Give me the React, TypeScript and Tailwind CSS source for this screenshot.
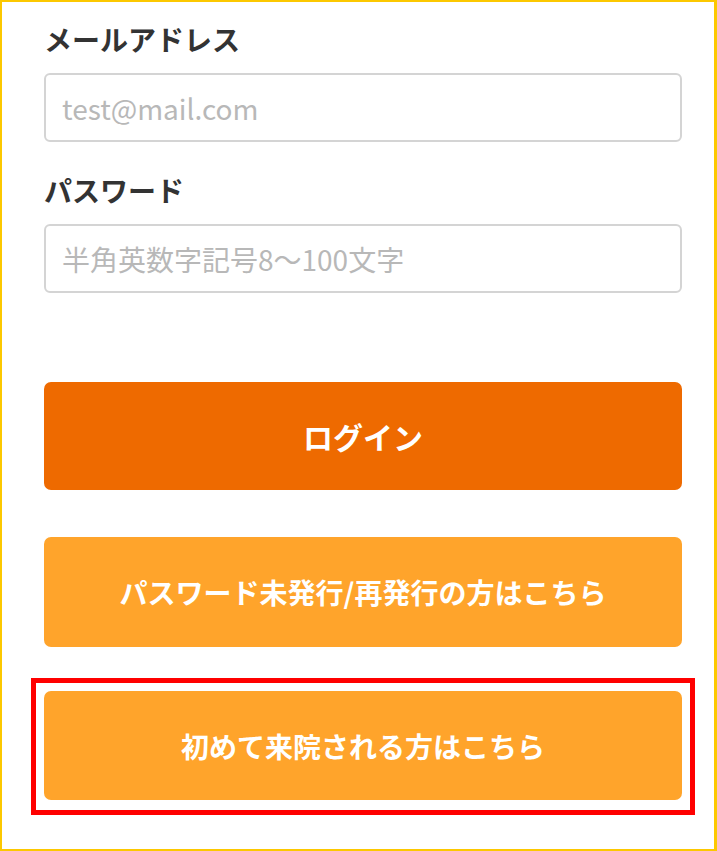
import React from "react";

const font = { fontFamily: '"Noto Sans CJK JP", "Noto Sans", sans-serif' };

function Field({ label, placeholder, type, gapTop }: { label: string; placeholder: string; type: string; gapTop: string }) {
  return (
    <div className={gapTop}>
      <label className="block text-[28px] font-bold leading-[38px] text-[#333333]">{label}</label>
      <input
        type={type}
        placeholder={placeholder}
        className="mt-[15px] block h-[69px] w-full rounded-[6px] border-2 border-[#d4d4d4] bg-white px-4 text-[28px] text-[#333] outline-none placeholder:text-[#b8b8b8]"
      />
    </div>
  );
}

export default function App() {
  return (
    <div style={font} className="h-[851px] w-[717px] border-2 border-r-[3px] border-[#fcc800] bg-white">
      <div className="pl-[42px] pr-[32px] pt-[18px]">
        <Field label="メールアドレス" placeholder="test@mail.com" type="email" gapTop="" />
        <Field label="パスワード" placeholder="半角英数字記号8〜100文字" type="password" gapTop="mt-[29px]" />

        <button className="mt-[89px] flex h-[108px] w-full items-center justify-center rounded-[7px] bg-[#ee6a00] text-[30px] font-bold text-white">
          ログイン
        </button>

        <button className="mt-[47px] flex h-[110px] w-full items-center justify-center rounded-[7px] bg-[#ffa42b] text-[28px] font-bold text-white">
          パスワード未発行/再発行の方はこちら
        </button>

        <div className="mx-[-13px] mt-[31px] border-[5px] border-[#ff0000] bg-white px-[8px] pb-[10px] pt-[8px]">
          <button className="flex h-[109px] w-full items-center justify-center rounded-[7px] bg-[#ffa42b] text-[28px] font-bold text-white">
            初めて来院される方はこちら
          </button>
        </div>
      </div>
    </div>
  );
}
